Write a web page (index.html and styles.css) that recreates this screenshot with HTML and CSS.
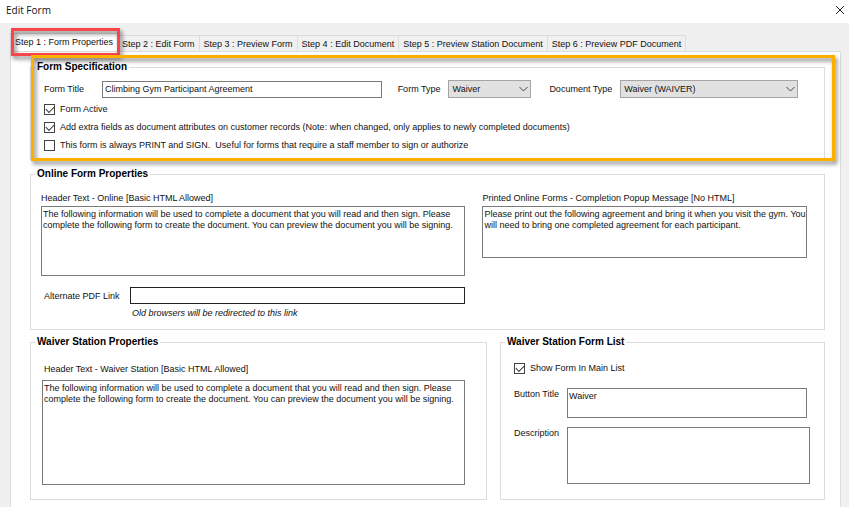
FILE: index.html
```
<!DOCTYPE html>
<html lang="en">

<head>
	<meta charset="UTF-8">
	<title>Edit Form</title>
	<link rel="stylesheet" href="styles.css">
</head>

<body>
	<header class="titlebar">
		<h1>Edit Form</h1>
		<button type="button" class="close" aria-label="Close">
			<svg width="10" height="10" viewBox="0 0 10 10"><path d="M1 1l8 8M9 1l-8 8" stroke="#222" fill="none"/></svg>
		</button>
	</header>

	<nav class="tabs">
		<button type="button" class="tab active">Step 1 : Form Properties</button>
		<button type="button" class="tab">Step 2 : Edit Form</button>
		<button type="button" class="tab">Step 3 : Preview Form</button>
		<button type="button" class="tab">Step 4 : Edit Document</button>
		<button type="button" class="tab">Step 5 : Preview Station Document</button>
		<button type="button" class="tab">Step 6 : Preview PDF Document</button>
	</nav>

	<main class="page">
		<fieldset class="group spec">
			<legend>Form Specification</legend>
			<div class="group-body">
				<div class="spec-row">
					<label for="formTitle">Form Title</label>
					<input type="text" id="formTitle" class="form-title" value="Climbing Gym Participant Agreement">
					<label for="formType">Form Type</label>
					<div class="select form-type">
						<select id="formType"><option>Waiver</option></select>
						<svg width="9" height="6" viewBox="0 0 9 6"><path d="M.5 1l4 4 4-4" stroke="#444" fill="none"/></svg>
					</div>
					<label for="docType">Document Type</label>
					<div class="select doc-type">
						<select id="docType"><option>Waiver (WAIVER)</option></select>
						<svg width="9" height="6" viewBox="0 0 9 6"><path d="M.5 1l4 4 4-4" stroke="#444" fill="none"/></svg>
					</div>
				</div>
				<div class="checks">
					<label class="check"><input type="checkbox" checked> Form Active</label>
					<label class="check"><input type="checkbox" checked> Add extra fields as document attributes on customer records (Note: when changed, only applies to newly completed documents)</label>
					<label class="check"><input type="checkbox"> This form is always PRINT and SIGN.&nbsp; Useful for forms that require a staff member to sign or authorize</label>
				</div>
			</div>
		</fieldset>

		<fieldset class="group online">
			<legend>Online Form Properties</legend>
			<div class="group-body online-cols">
				<div class="col">
					<label for="headerOnline">Header Text - Online [Basic HTML Allowed]</label>
					<textarea id="headerOnline" class="header-online">The following information will be used to complete a document that you will read and then sign. Please
complete the following form to create the document. You can preview the document you will be signing.</textarea>
					<div class="pdf-link">
						<label for="pdfLink">Alternate PDF Link</label>
						<input type="text" id="pdfLink">
						<em>Old browsers will be redirected to this link</em>
					</div>
				</div>
				<div class="col">
					<label for="popup">Printed Online Forms - Completion Popup Message [No HTML]</label>
					<textarea id="popup" class="popup">Please print out the following agreement and bring it when you visit the gym. You
will need to bring one completed agreement for each participant.</textarea>
				</div>
			</div>
		</fieldset>

		<div class="station">
			<fieldset class="group station-props">
				<legend>Waiver Station Properties</legend>
				<div class="group-body col">
					<label for="headerStation">Header Text - Waiver Station [Basic HTML Allowed]</label>
					<textarea id="headerStation" class="header-station">The following information will be used to complete a document that you will read and then sign. Please
complete the following form to create the document. You can preview the document you will be signing.</textarea>
				</div>
			</fieldset>

			<fieldset class="group station-list">
				<legend>Waiver Station Form List</legend>
				<div class="group-body">
					<label class="check"><input type="checkbox" checked> Show Form In Main List</label>
					<div class="list-fields">
						<label for="buttonTitle">Button Title</label>
						<textarea id="buttonTitle" class="button-title">Waiver</textarea>
						<label for="description">Description</label>
						<textarea id="description" class="description"></textarea>
					</div>
				</div>
			</fieldset>
		</div>
	</main>
</body>

</html>
```
FILE: styles.css
```
* {
	box-sizing: border-box;
	margin: 0;
	padding: 0;
}

body {
	background: #f0f0f0;
	color: #111;
	font-family: "Liberation Sans", Arial, sans-serif;
	font-size: 9px;
	line-height: 12px;
}

button,
input,
select,
textarea {
	font: inherit;
	color: inherit;
}

label {
	white-space: nowrap;
}

/* title bar */
.titlebar {
	display: flex;
	align-items: center;
	justify-content: space-between;
	height: 23px;
	padding: 0 4px 3px 6px;
	background: #fff;
}
.titlebar h1 {
	font: 10px/16px "Open Sans", "Noto Sans", sans-serif;
}
.close {
	display: flex;
	border: 0;
	background: none;
}

/* tabs */
.tabs {
	display: flex;
	align-items: flex-end;
	padding: 10px 8px 0 10px;
}
.tab {
	height: 16px;
	padding: 0 4px;
	border: 1px solid #dcdcdc;
	border-width: 1px 1px 0 0;
	background: #f0f0f0;
	white-space: nowrap;
}
.tab.active {
	position: relative;
	height: 18px;
	padding-bottom: 2px;
	border-left-width: 1px;
	background: #fff;
}
/* highlight boxes */
.tab.active::after,
.spec::after {
	content: "";
	position: absolute;
	pointer-events: none;
	filter: drop-shadow(2px 3px 2px rgba(0, 0, 0, .5));
}
.tab.active::after {
	inset: -6px -3px -5px 0;
	border: 3px solid #f94449;
}
.spec::after {
	inset: -19px -11px -2px 0;
	border: 3px solid #fcaf00;
}

/* tab page */
.page {
	margin: 0 8px 0 10px;
	padding: 8px 15px 20px 19px;
	border: 1px solid #dcdcdc;
	background: #fff;
}
.group {
	min-width: 0;
	border: 1px solid #dcdcdc;
}
.group legend {
	margin-left: 4px;
	padding: 0 2px;
	color: #000;
	font-weight: bold;
	font-size: 10px;
	line-height: 14px;
}

input[type="text"],
textarea {
	display: block;
	width: 100%;
	border: 1px solid #7a7a7a;
	background: #fff;
	resize: none;
	overflow: hidden;
}
input[type="text"] {
	height: 17px;
	padding: 0 2px;
}
textarea {
	padding: 2px 1px;
	line-height: 11px;
	white-space: pre;
}

.select {
	position: relative;
}
.select select {
	display: block;
	width: 100%;
	height: 18px;
	padding: 0 3px;
	border: 1px solid #a5a5a5;
	border-radius: 0;
	background: #e1e1e1;
	appearance: none;
}
.select svg {
	position: absolute;
	top: 6px;
	right: 3px;
	pointer-events: none;
}

.check {
	display: flex;
	align-items: center;
	gap: 5px;
	height: 12px;
}
.check input {
	width: 11px;
	height: 11px;
	border: 1px solid #444;
	background: #fff;
	appearance: none;
}
.check input:checked::before {
	content: "";
	display: block;
	width: 7px;
	height: 4px;
	margin: 1px;
	border: solid #333;
	border-width: 0 0 1px 1px;
	transform: rotate(-45deg);
}

/* form specification */
.spec {
	position: relative;
	height: 100px;
}
.spec .group-body {
	padding: 6px 26px 0 13px;
}
.spec-row {
	display: flex;
	align-items: center;
}
.form-title {
	flex: 274;
	min-width: 0;
	margin: 0 16px 0 18px;
}
.form-type {
	flex: 83;
	margin: 0 18px 0 8px;
}
.doc-type {
	flex: 178;
	margin-left: 8px;
}
.checks {
	display: grid;
	gap: 6px;
	margin-top: 5px;
}

/* online form properties */
.online {
	height: 163px;
	margin-top: 7px;
}
.online-cols {
	display: grid;
	grid-template-columns: 425fr 325fr;
	gap: 17px;
	padding: 11px 17px 0 10px;
}
.col label {
	display: block;
}
.header-online {
	height: 70px;
	margin-top: 2px;
}
.popup {
	height: 52px;
	margin-top: 2px;
}
.pdf-link {
	display: grid;
	grid-template-columns: 86px 1fr;
	align-items: center;
	row-gap: 3px;
	margin-top: 11px;
	padding-left: 3px;
}
.pdf-link input[type="text"] {
	border-color: #222;
}
.pdf-link em {
	grid-column: 2;
	padding-left: 2px;
}

/* waiver station */
.station {
	display: grid;
	grid-template-columns: 457fr 325fr;
	gap: 13px;
	margin-top: 5px;
}
.station .group {
	height: 165px;
}
.station-props .group-body {
	padding: 14px 21px 0 11px;
}
.station-props label {
	padding-left: 2px;
}
.header-station {
	height: 105px;
	margin-top: 5px;
}
.station-list .group-body {
	padding: 13px 14px 0 13px;
}
.list-fields {
	display: grid;
	grid-template-columns: 53px 1fr;
	row-gap: 9px;
	margin-top: 14px;
}
.button-title {
	width: calc(100% - 3px);
	height: 30px;
}
.description {
	height: 57px;
}
```
